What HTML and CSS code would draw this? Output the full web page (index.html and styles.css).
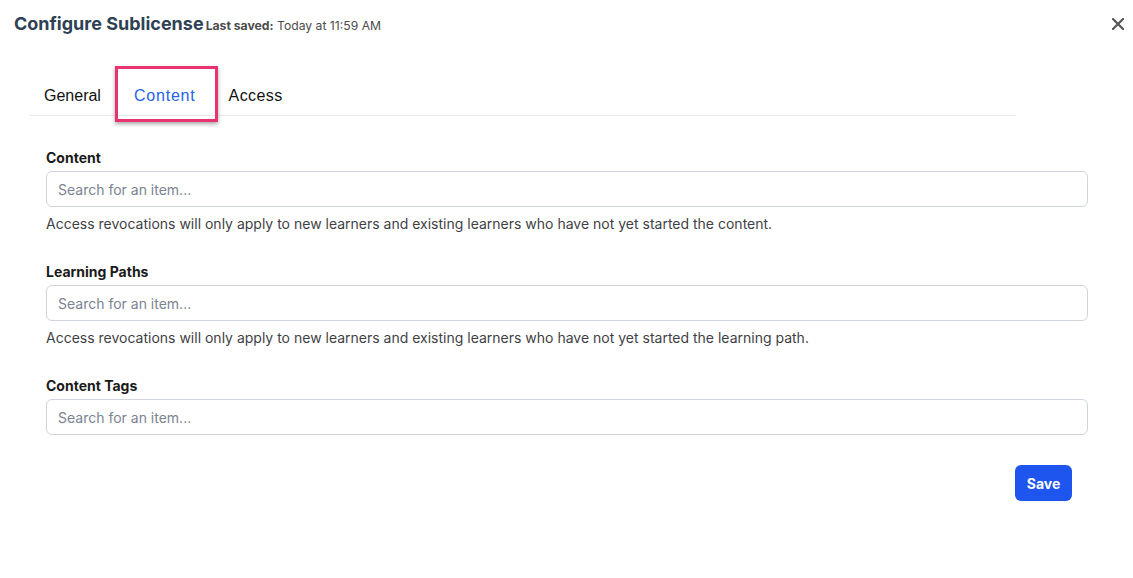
FILE: index.html
```html
<!DOCTYPE html>
<html lang="en">
<head>
  <meta charset="UTF-8" />
  <meta name="viewport" content="width=device-width, initial-scale=1.0"/>
  <title>Configure Sublicense</title>
  <link rel="stylesheet" href="styles.css">
</head>
<body>
  <div class="modal">
    <div class="header">
      <h1>Configure Sublicense</h1>
      <span class="saved"><strong>Last saved:</strong> Today at 11:59 AM</span>
      <button class="close" aria-label="Close">
        <svg width="12" height="12" viewBox="0 0 12 12">
          <path d="M1 1 L11 11 M11 1 L1 11" stroke="#555" stroke-width="2.2" stroke-linecap="round"/>
        </svg>
      </button>
    </div>

    <div class="tabs">
      <div class="tab">General</div>
      <div class="tab active">Content</div>
      <div class="tab">Access</div>
    </div>

    <div class="form">
      <div class="field">
        <label>Content</label>
        <input type="text" placeholder="Search for an item...">
        <p class="help">Access revocations will only apply to new learners and existing learners who have not yet started the content.</p>
      </div>

      <div class="field">
        <label>Learning Paths</label>
        <input type="text" placeholder="Search for an item...">
        <p class="help">Access revocations will only apply to new learners and existing learners who have not yet started the learning path.</p>
      </div>

      <div class="field">
        <label>Content Tags</label>
        <input type="text" placeholder="Search for an item...">
      </div>

      <div class="actions">
        <button class="save">Save</button>
      </div>
    </div>
  </div>
</body>
</html>
```

FILE: styles.css
```css
body {
  margin: 0;
  padding: 0;
  background: #fff;
  font-family: Inter, 'Noto Sans', sans-serif;
  color: #1f2937;
}

.header {
  display: flex;
  align-items: baseline;
  padding: 14px 9px 0 14px;
  height: 34px;
}

h1 {
  margin: 0;
  font-size: 18px;
  line-height: 20px;
  font-weight: 700;
  color: #2e4154;
}

.saved {
  margin-left: 2px;
  font-size: 12.2px;
  color: #4b4b4b;
}

.saved strong {
  font-weight: 700;
}

.close {
  margin-left: auto;
  align-self: flex-start;
  margin-top: 4px;
  border: none;
  background: none;
  padding: 0;
  width: 12px;
  height: 12px;
  display: flex;
}

.tabs {
  display: flex;
  margin: 28px 118px 0 30px;
  height: 39px;
  border-bottom: 1px solid #e5e7eb;
  font-family: 'Liberation Sans', Arial, sans-serif;
  font-size: 16px;
}

.tab {
  display: flex;
  align-items: center;
  padding: 0 14px;
  color: #111;
  position: relative;
}

.tab.active {
  color: #2563eb;
  padding: 0 22px 0 19px;
  margin-right: -3px;
  letter-spacing: 0.8px;
}

.tab:last-child {
  letter-spacing: 0.4px;
}

.tab.active::after {
  content: "";
  position: absolute;
  top: -10px;
  bottom: -7px;
  left: 0;
  right: 0;
  border: 3px solid #e8336e;
  box-shadow: 0 2px 4px rgba(0, 0, 0, 0.35);
}

.form {
  padding: 32px 45px 0 46px;
}

.field {
  margin-bottom: 28px;
}

label {
  display: block;
  font-size: 14px;
  line-height: 20px;
  font-weight: 700;
  color: #1a1a1a;
  margin-bottom: 3px;
}

input {
  display: block;
  box-sizing: border-box;
  width: 100%;
  height: 36px;
  border: 1px solid #cfd4dc;
  border-radius: 6px;
  padding: 0 11px;
  font-family: Inter, 'Noto Sans', sans-serif;
  font-size: 14px;
  color: #1f2937;
}

input::placeholder {
  color: #7b8391;
}

.help {
  margin: 7px 0 0 0;
  font-size: 14px;
  line-height: 20px;
  color: #3f3f46;
}

.actions {
  display: flex;
  justify-content: flex-end;
  margin-top: 30px;
  padding-right: 16px;
}

.save {
  width: 57px;
  height: 36px;
  border: none;
  border-radius: 6px;
  background: #1d55ee;
  color: #fff;
  font-family: Inter, 'Noto Sans', sans-serif;
  font-size: 14px;
  font-weight: 700;
}
```
